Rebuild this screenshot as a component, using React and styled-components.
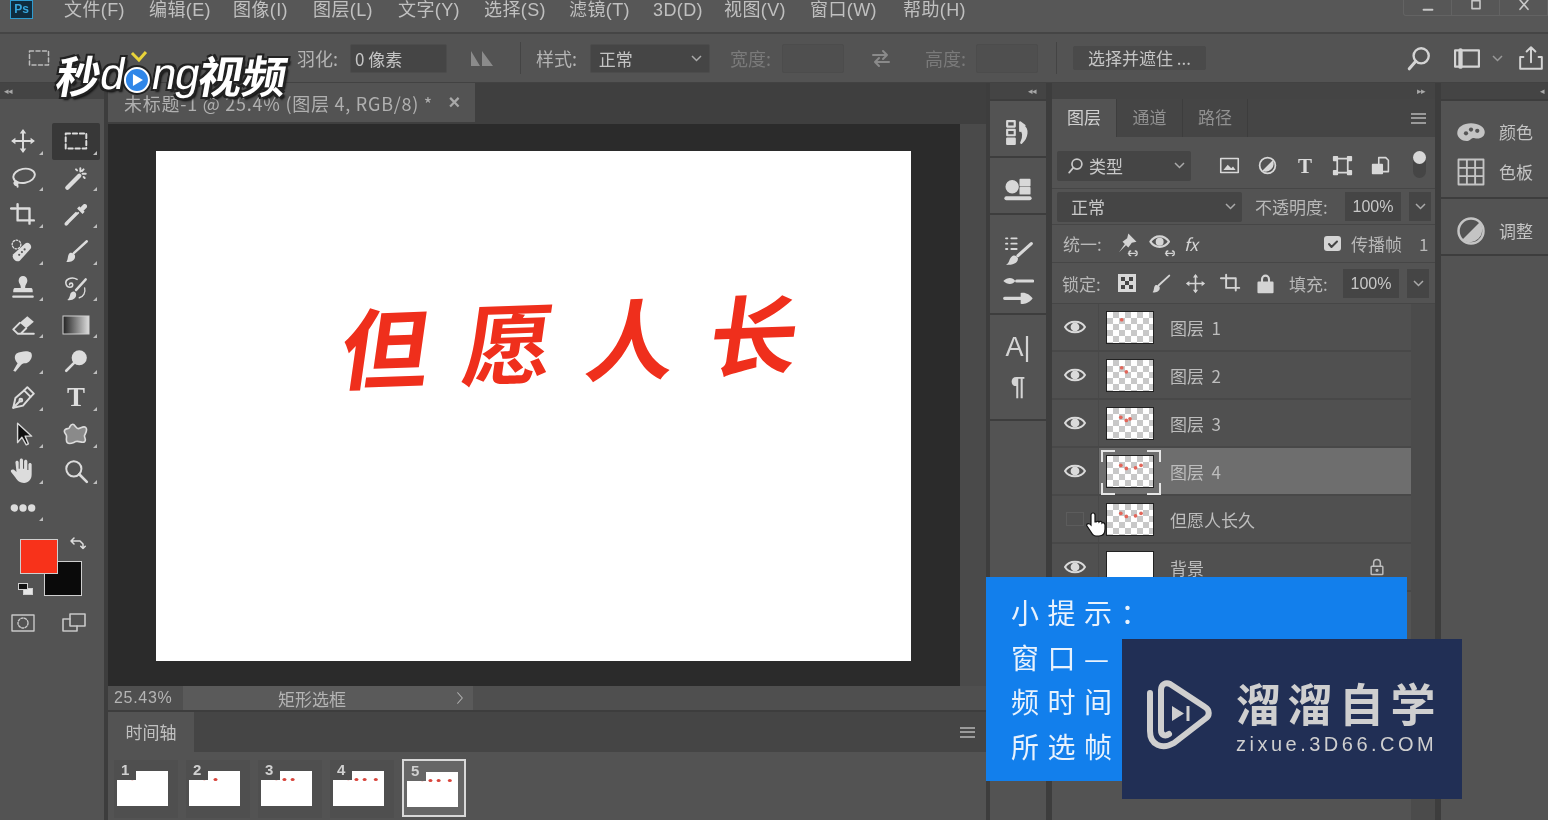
import React from "react";
import styled, { createGlobalStyle } from "styled-components";

const CJK = `"Noto Sans CJK SC", "Liberation Sans", sans-serif`;
const MIXED = `"Liberation Sans", "Noto Sans CJK SC", sans-serif`;

const GlobalStyle = createGlobalStyle`
  html, body { margin: 0; padding: 0; background: #535353; overflow: hidden; }
  * { box-sizing: border-box; }
`;

const Page = styled.div`
  position: relative;
  width: 1548px;
  height: 820px;
  overflow: hidden;
  display: flex;
  flex-direction: column;
  background: #3a3a3a;
  font-family: ${CJK};
  color: #bcbcbc;
  filter: blur(0.55px);
`;

const MenuBar = styled.div`
  height: 34px;
  flex: none;
  display: flex;
  align-items: flex-start;
  background: #575757;
  border-bottom: 2px solid #454545;
  padding-left: 10px;
`;
const PsBadge = styled.div`
  width: 23px;
  height: 19px;
  margin-right: 31px;
  background: #0f2c3f;
  border: 1px solid #2e9bd0;
  color: #37a5dc;
  font: bold 12px "Liberation Sans", sans-serif;
  line-height: 17px;
  text-align: center;
`;
const MenuItem = styled.span`
  width: ${(p) => p.$w}px;
  font-family: ${MIXED};
  font-size: 18px;
  line-height: 21px;
  letter-spacing: 0.4px;
  color: #c0c0c0;
  white-space: nowrap;
`;
const WindowControls = styled.div`
  margin-left: auto;
  width: 145px;
  height: 16px;
  display: flex;
  border: 1px solid #636363;
  border-top: none;
  border-right: none;
  border-radius: 0 0 0 3px;
`;
const WindowButton = styled.div`
  flex: 1;
  display: flex;
  justify-content: center;
  align-items: flex-start;
  border-right: 1px solid #636363;
  color: #c8c8c8;
`;

const OptionsBar = styled.div`
  height: 49px;
  flex: none;
  display: flex;
  align-items: center;
  background: #535353;
  border-bottom: 1px solid #424242;
  padding-left: 27px;
`;
const OptionLabel = styled.span`
  font-size: 18px;
  color: ${(p) => (p.$dim ? "#7a7a7a" : "#b4b4b4")};
  width: ${(p) => p.$w}px;
  margin-left: ${(p) => p.$ml || 0}px;
  white-space: nowrap;
`;
const OptionField = styled.div`
  width: ${(p) => p.$w}px;
  height: 29px;
  margin-left: ${(p) => p.$ml || 0}px;
  background: ${(p) => (p.$dim ? "#4f4f4f" : "#454545")};
  border: 1px solid #4c4c4c;
  border-radius: 2px;
  display: flex;
  align-items: center;
  justify-content: space-between;
  padding: 0 7px 0 4px;
  font-size: 17px;
  color: #c4c4c4;
`;
const OptionDivider = styled.div`
  width: 1px;
  height: 32px;
  margin-left: ${(p) => p.$ml}px;
  background: #444;
`;
const RefineButton = styled.div`
  width: 133px;
  height: 24px;
  margin-left: 16px;
  background: #4a4a4a;
  border-radius: 2px;
  font-size: 17px;
  line-height: 24px;
  text-align: center;
  color: #c4c4c4;
`;

const Workspace = styled.div`
  flex: 1;
  min-height: 0;
  display: flex;
  gap: 4px;
  background: #3d3d3d;
`;
const Strip = styled.div`
  height: 16px;
  flex: none;
  background: #444;
  color: #a8a8a8;
  font-size: 9px;
  line-height: 15px;
  padding: 0 ${(p) => p.$pr || 4}px 0 4px;
  display: flex;
  justify-content: ${(p) => p.$justify || "flex-start"};
  letter-spacing: -1px;
`;
const ToolColumn = styled.div`
  width: 104px;
  flex: none;
  display: flex;
  flex-direction: column;
  background: #535353;
`;
const ToolGrid = styled.div`
  display: grid;
  grid-template-columns: 46px 48px;
  grid-auto-rows: 36.65px;
  padding: 24px 0 0 0;
  column-gap: 6px;
`;
const Tool = styled.div`
  position: relative;
  display: flex;
  align-items: center;
  justify-content: center;
  color: #dcdcdc;
  background: ${(p) => (p.$active ? "#383838" : "transparent")};
  border-radius: 2px;
  &::after {
    content: "";
    position: absolute;
    right: 3px;
    bottom: 5px;
    border-left: 4px solid transparent;
    border-bottom: 4px solid #bdbdbd;
  }
`;
const ToolLetter = styled.span`
  font: bold 27px "Liberation Serif", serif;
  color: #dedede;
`;
const Swatches = styled.div`
  position: relative;
  width: 100px;
  height: 72px;
  margin-top: 13px;
`;
const Swatch = styled.div`
  position: absolute;
  left: ${(p) => p.$x}px;
  top: ${(p) => p.$y}px;
  width: ${(p) => p.$size}px;
  height: ${(p) => p.$size - 3}px;
  background: ${(p) => p.$color};
  border: 1px solid #cfcfcf;
`;
const SwatchIcon = styled.div`
  position: absolute;
  left: ${(p) => p.$x}px;
  top: ${(p) => p.$y}px;
  color: #ddd;
  display: flex;
`;
const ModeRow = styled.div`
  display: flex;
  gap: 21px;
  padding: 0 0 0 8px;
  color: #c8c8c8;
`;

const Center = styled.div`
  width: 878px;
  flex: none;
  display: flex;
  flex-direction: column;
`;
const TabStrip = styled.div`
  height: 41px;
  flex: none;
  background: #3f3f3f;
`;
const DocTab = styled.div`
  width: 367px;
  height: 39px;
  background: #535353;
  display: flex;
  align-items: center;
  justify-content: space-between;
  padding: 0 14px 0 16px;
  font-size: 18px;
  color: #b0b0b0;
  white-space: nowrap;
  letter-spacing: 0.75px;
`;
const TabClose = styled.span`
  font: bold 20px "Liberation Sans", sans-serif;
  color: #a8a8a8;
`;
const DocRow = styled.div`
  height: 562px;
  flex: none;
  display: flex;
`;
const Canvas = styled.div`
  width: 852px;
  background: #2b2b2b;
  padding: 27px 0 0 48px;
`;
const Artboard = styled.div`
  width: 755px;
  height: 510px;
  background: #fff;
  display: flex;
  justify-content: center;
  padding: 131px 0 0 52px;
`;
const Calligraphy = styled.div`
  font: 700 88px "Noto Sans CJK SC", sans-serif;
  line-height: 110px;
  color: #ef2f1c;
  letter-spacing: 34px;
  margin-right: -20px;
  white-space: nowrap;
  transform: skewX(-10deg) rotate(-2deg);
`;
const ScrollTrack = styled.div`
  width: 26px;
  background: #4a4a4a;
`;
const StatusBar = styled.div`
  height: 24px;
  flex: none;
  display: flex;
  background: #4f4f4f;
  font-size: 17px;
  color: #b4b4b4;
`;
const ZoomValue = styled.div`
  width: 75px;
  padding-left: 6px;
  font: 16px/24px "Liberation Sans", sans-serif;
  letter-spacing: 0.7px;
`;
const StatusInfo = styled.div`
  width: 290px;
  background: #5a5a5a;
  display: flex;
  align-items: center;
  justify-content: space-between;
  padding: 0 6px 0 95px;
`;
const Timeline = styled.div`
  flex: 1;
  display: flex;
  flex-direction: column;
  background: #535353;
  border-top: 2px solid #3d3d3d;
`;
const TimelineHead = styled.div`
  height: 40px;
  flex: none;
  display: flex;
  align-items: stretch;
  justify-content: space-between;
  padding-right: 11px;
  background: #454545;
`;
const TimelineTab = styled.div`
  width: 86px;
  background: #535353;
  font-size: 17px;
  line-height: 40px;
  text-align: center;
  color: #c0c0c0;
`;
const MenuLines = styled.div`
  align-self: center;
  width: 15px;
  height: 11px;
  border-top: 2px solid #9a9a9a;
  border-bottom: 2px solid #9a9a9a;
  position: relative;
  &::after {
    content: "";
    position: absolute;
    left: 0;
    right: 0;
    top: 2.5px;
    height: 2px;
    background: #9a9a9a;
  }
`;
const Frames = styled.div`
  display: flex;
  gap: 8px;
  padding: 8px 0 0 6px;
`;
const Frame = styled.div`
  position: relative;
  width: 64px;
  height: 58px;
  padding: 11px 0 0 3px;
  background: ${(p) => (p.$selected ? "#666" : "#4f4f4f")};
  border: ${(p) => (p.$selected ? "2px solid #d8d8d8" : "none")};
  margin-top: ${(p) => (p.$selected ? "-1px" : "0")};
`;
const FrameThumb = styled.div`
  width: 51px;
  height: 35px;
  background: #fff;
`;
const FrameNo = styled.span`
  position: absolute;
  left: 0;
  top: 0;
  width: 22px;
  height: 20px;
  background: ${(p) => (p.$selected ? "#666" : "#4f4f4f")};
  padding-left: 7px;
  font: bold 15px/20px "Liberation Sans", sans-serif;
  color: #d0d0d0;
`;

const Dock = styled.div`
  width: ${(p) => p.$w}px;
  margin-left: ${(p) => p.$ml || 0}px;
  flex: none;
  display: flex;
  flex-direction: column;
  gap: 2px;
  background: #3d3d3d;
`;
const DockGroup = styled.div`
  height: ${(p) => p.$h}px;
  flex: ${(p) => (p.$fill ? "1" : "none")};
  display: flex;
  flex-direction: column;
  align-items: ${(p) => (p.$wide ? "stretch" : "center")};
  gap: ${(p) => p.$gap || 0}px;
  padding-top: ${(p) => p.$pt || 0}px;
  background: #535353;
  color: #d8d8d8;
`;
const DockEntry = styled.div`
  display: flex;
  align-items: center;
  gap: 13px;
  padding-left: 15px;
  font-size: 17px;
  line-height: 30px;
  color: #c4c4c4;
`;
const DockLetter = styled.span`
  font: ${(p) => p.$font};
  color: #d4d4d4;
`;

const Panel = styled.div`
  width: 383px;
  margin-left: 2px;
  flex: none;
  display: flex;
  flex-direction: column;
  background: #535353;
`;
const PanelTabs = styled.div`
  height: 38px;
  flex: none;
  display: flex;
  align-items: stretch;
  background: #454545;
  padding-right: 9px;
`;
const PanelTab = styled.div`
  width: ${(p) => p.$w}px;
  background: ${(p) => (p.$active ? "#535353" : "transparent")};
  border-right: 1px solid #3d3d3d;
  color: ${(p) => (p.$active ? "#d0d0d0" : "#909090")};
  font-size: 17px;
  line-height: 36px;
  text-align: center;
`;
const PanelMenu = styled(MenuLines)`
  margin-left: auto;
`;
const PanelRow = styled.div`
  height: ${(p) => p.$h}px;
  flex: none;
  display: flex;
  align-items: center;
  padding: ${(p) => p.$pt || 0}px 0 0 ${(p) => p.$pl || 5}px;
  border-bottom: 1px solid #464646;
  color: #b8b8b8;
  font-size: 17px;
`;
const DropDown = styled.div`
  width: ${(p) => p.$w}px;
  height: ${(p) => p.$h || 30}px;
  flex: none;
  background: #454545;
  border-radius: 2px;
  display: flex;
  align-items: center;
  justify-content: space-between;
  padding: 0 6px 0 ${(p) => p.$pl || 14}px;
  font-size: 17px;
  color: #c8c8c8;
`;
const DropLabel = styled.span`
  display: flex;
  align-items: center;
  gap: 5px;
`;
const FilterIcons = styled.div`
  display: flex;
  align-items: center;
  gap: 17px;
  margin-left: 28px;
  color: #d8d8d8;
`;
const FilterLetter = styled.span`
  font: bold 21px/22px "Liberation Serif", serif;
  color: #dcdcdc;
  width: 20px;
  text-align: center;
`;
const Toggle = styled.div`
  position: relative;
  width: 13px;
  height: 24px;
  margin-left: 22px;
  border-radius: 7px;
  background: #454545;
  &::before {
    content: "";
    position: absolute;
    left: 0;
    top: -3px;
    width: 13px;
    height: 13px;
    border-radius: 50%;
    background: #d8d8d8;
  }
`;
const Percent = styled.div`
  width: 56px;
  height: 29px;
  flex: none;
  background: #454545;
  font: 16px/29px "Liberation Sans", sans-serif;
  text-align: center;
  color: #c8c8c8;
`;
const PercentCaret = styled.div`
  width: 22px;
  height: 29px;
  margin-left: 8px;
  background: #454545;
  display: flex;
  align-items: center;
  justify-content: center;
  flex: none;
`;
const RowLabel = styled.span`
  width: ${(p) => p.$w}px;
  margin-left: ${(p) => p.$ml || 0}px;
  flex: none;
  white-space: nowrap;
  color: ${(p) => p.$color || "#b8b8b8"};
`;
const IconGroup = styled.div`
  display: flex;
  align-items: center;
  gap: ${(p) => p.$gap}px;
  margin-left: ${(p) => p.$ml || 0}px;
  color: #d4d4d4;
`;
const CheckBox = styled.div`
  width: 17px;
  height: 15px;
  margin-left: auto;
  margin-right: 10px;
  background: #d4d4d4;
  border-radius: 3px;
  color: #444;
  display: flex;
  align-items: center;
  justify-content: center;
`;
const LayerArea = styled.div`
  flex: 1;
  display: flex;
`;
const LayerList = styled.div`
  width: 359px;
  flex: none;
  display: flex;
  flex-direction: column;
`;
const LayerTrack = styled.div`
  flex: 1;
  background: #4b4b4b;
`;
const LayerRow = styled.div`
  height: 48px;
  flex: none;
  display: flex;
  align-items: center;
  border-bottom: 2px solid #484848;
  background: #505050;
`;
const EyeCell = styled.div`
  position: relative;
  width: 47px;
  height: 100%;
  flex: none;
  display: flex;
  align-items: center;
  justify-content: center;
  border-right: 1px solid #494949;
  color: #dadada;
`;
const HiddenBox = styled.div`
  width: 18px;
  height: 14px;
  border: 1px solid #5c5c5c;
`;
const HandCursor = styled.div`
  position: absolute;
  right: -10px;
  top: 15px;
  display: flex;
`;
const LayerBody = styled.div`
  flex: 1;
  height: 100%;
  display: flex;
  align-items: center;
  padding-left: 7px;
  background: ${(p) => (p.$selected ? "#6e6e6e" : "transparent")};
`;
const ThumbFrame = styled.div`
  position: relative;
  width: 48px;
  height: 33px;
  flex: none;
  margin-right: 16px;
  border: 1px solid #222;
  background: ${(p) =>
    p.$solid
      ? "#fff"
      : "repeating-conic-gradient(#c8c8c8 0% 25%, #fff 0% 50%) 0 0 / 12px 12px"};
`;
const CornerMarks = styled.svg`
  position: absolute;
  left: -6px;
  top: -6px;
`;
const Specks = styled.svg`
  position: absolute;
  inset: 0;
  width: 100%;
  height: 100%;
`;
const LayerName = styled.span`
  font-size: 17px;
  color: #bdbdbd;
  white-space: pre;
`;
const LayerLock = styled.div`
  margin-left: auto;
  margin-right: 24px;
  display: flex;
  color: #bdbdbd;
`;

const Watermark = styled.div`
  position: absolute;
  left: 57px;
  top: 44px;
  height: 60px;
  display: flex;
  align-items: center;
  transform: skewX(-10deg);
  font-family: ${MIXED};
  font-weight: 700;
  font-size: 44px;
  color: #fff;
  text-shadow: 2px 2px 0 #222, -2px 2px 0 #222, 2px -2px 0 #222, -2px -2px 0 #222, 3px 3px 2px #111;
  white-space: nowrap;
`;
const WatermarkLatin = styled.span`
  font: 400 44px "Liberation Sans", sans-serif;
  line-height: 60px;
  letter-spacing: -1px;
`;
const PlayDot = styled.span`
  position: relative;
  width: 26px;
  height: 26px;
  margin: 12px 1px 0;
  border-radius: 50%;
  background: #2f86e8;
  border: 2px solid #fff;
  box-shadow: 0 0 0 2px #222;
  display: flex;
  align-items: center;
  justify-content: center;
  transform: skewX(10deg);
`;
const Heart = styled.svg`
  position: absolute;
  left: 4px;
  top: -18px;
`;

const TipCard = styled.div`
  position: absolute;
  left: 986px;
  top: 577px;
  width: 421px;
  height: 204px;
  background: #127fec;
  padding: 13px 0 0 25px;
  color: #e8f2fd;
  font-size: 28px;
  line-height: 44.6px;
  letter-spacing: 8.5px;
`;
const LogoCard = styled.div`
  position: absolute;
  left: 1122px;
  top: 639px;
  width: 340px;
  height: 160px;
  background: #212f55;
  display: flex;
  align-items: center;
  gap: 23px;
  padding: 0 0 3px 25px;
  color: #cfcfcf;
`;
const LogoMark = styled.svg`
  margin-bottom: 5px;
  flex: none;
`;
const LogoText = styled.div`
  display: flex;
  flex-direction: column;
`;
const LogoTitle = styled.div`
  font-family: ${MIXED};
  font-size: 45px;
  font-weight: 700;
  line-height: 54px;
  letter-spacing: 6.5px;
  white-space: nowrap;
`;
const LogoUrl = styled.div`
  font: 20px/24px "Liberation Sans", sans-serif;
  letter-spacing: 3.5px;
  margin-top: -2px;
  white-space: nowrap;
`;

const Glyph = ({ s = 26, w, h, sw = 1.8, children }) => (
  <svg
    width={w || s}
    height={h || s}
    viewBox="0 0 24 24"
    fill="none"
    stroke="currentColor"
    strokeWidth={sw}
    strokeLinecap="round"
    strokeLinejoin="round"
  >
    {children}
  </svg>
);

const Fill = (props) => <path fill="currentColor" stroke="none" {...props} />;

const icons = {
  move: (
    <>
      <path d="M12 3v18M3 12h18" />
      <Fill d="M12 1l3 4H9zM12 23l-3-4h6zM1 12l4-3v6zM23 12l-4 3V9z" />
    </>
  ),
  marquee: <rect x="2.5" y="5" width="19" height="14" strokeDasharray="4 2.5" />,
  lasso: (
    <>
      <ellipse cx="13" cy="10" rx="10" ry="6.5" transform="rotate(-10 13 10)" />
      <path d="M5 15c-2 2 0 4 1.5 3s0-3-1.5-3c1 2 2 3 2 5" />
    </>
  ),
  wand: (
    <>
      <path d="M4 21L15 10" strokeWidth="4" />
      <path d="M16 3v3M21 8h-3M19 4l-1.5 1.5M20 12l-1-1M12 4l1 1" />
    </>
  ),
  crop: <path d="M1 6h4M7 2v15h15M7 6h11v14" strokeWidth="2.2" />,
  dropper: (
    <>
      <path d="M14 10L5 19c-1 1-1 2-2 2s-1-1 0-2l9-9" />
      <Fill d="M13 6l5 5 2-2-1-1 3-3c1-2-1-4-3-3l-3 3-1-1z" />
    </>
  ),
  heal: (
    <>
      <Fill d="M3 15L14 5c3-2 7 2 5 5L9 21c-3 2-8-2-6-6z" />
      <circle cx="11" cy="13" r="1" fill="#555" stroke="none" />
      <circle cx="13.5" cy="10.5" r="1" fill="#555" stroke="none" />
      <circle cx="8.5" cy="15.5" r="1" fill="#555" stroke="none" />
      <circle cx="6" cy="6" r="4" strokeDasharray="1.5 1.5" strokeWidth="1.2" />
    </>
  ),
  brush: (
    <>
      <path d="M10 14L22 3" strokeWidth="2.2" />
      <Fill d="M3 22c5 1 9-2 8-6-1-2-3-3-5-2-2 2-1 6-3 8z" />
    </>
  ),
  stamp: (
    <>
      <Fill d="M8 5a4 4 0 0 1 8 0c0 3-2 3-2 7h5c2 0 2 2 2 4H3c0-2 0-4 2-4h5c0-4-2-4-2-7z" />
      <path d="M3 20h18" strokeWidth="2" />
    </>
  ),
  history: (
    <>
      <path d="M13 4C8 1 1 4 3 9c1 3 6 3 6 0 0-2-3-2-3 0" strokeWidth="1.4" />
      <path d="M12 14L21 4" strokeWidth="2.2" />
      <Fill d="M4 23c5 1 9-2 8-6-1-2-3-2-4-1-2 1-1 5-4 7z" />
      <path d="M20 12c1 4-1 8-5 9" strokeWidth="1.2" />
    </>
  ),
  eraser: (
    <>
      <Fill d="M9 10l7-6 6 5-7 6z" />
      <path d="M9 10l-6 6 4 4h15M15 15l-5 5" />
    </>
  ),
  smudge: <Fill d="M6 5c4-2 10-3 13-1 3 3 0 9-4 10-2 0-4 0-5 2l-5 6-2-1 4-7C5 12 3 8 6 5z" />,
  dodge: (
    <>
      <circle cx="15" cy="9" r="7" fill="currentColor" stroke="none" />
      <path d="M10 14l-7 7" strokeWidth="2.4" />
    </>
  ),
  pen: (
    <>
      <path d="M3 21l2-9 8-7 6 6-7 8z" />
      <path d="M3 21l6-6M13 5l3-3 6 6-3 3" />
      <circle cx="10" cy="14" r="1.3" />
    </>
  ),
  path: <path d="M7 2v18l4-5 4 7 2-1-3-7h6z" fill="#111" stroke="#d8d8d8" strokeWidth="1.3" />,
  shape: (
    <path
      d="M9 3c2 0 3 4 5 4s5-3 7-1 0 5-1 7 2 4 0 6-5-1-8 0-6 3-8 1 0-5-1-7-3-3-1-5 3 0 4-2 1-3 3-3z"
      fill="#8a8a8a"
      strokeWidth="1.5"
    />
  ),
  hand: (
    <Fill d="M5 4c0-2 3-2 3 0v6h1V2c0-2 3-2 3 0v8h1V3c0-2 3-2 3 0v8h1V6c0-2 3-2 3 0v9c0 5-3 8-7 8s-6-2-8-5l-4-5c-1-2 1-3 3-2l2 2z" />
  ),
  zoom: (
    <>
      <circle cx="10" cy="10" r="7" />
      <path d="M15 15l7 7" strokeWidth="2.4" />
    </>
  ),
  dots: (
    <>
      <circle cx="4" cy="12" r="2.5" fill="currentColor" />
      <circle cx="12" cy="12" r="2.5" fill="currentColor" />
      <circle cx="20" cy="12" r="2.5" fill="currentColor" />
    </>
  ),
};

const tools = [
  "move", "marquee", "lasso", "wand", "crop", "dropper", "heal", "brush", "stamp", "history",
  "eraser", "gradient", "smudge", "dodge", "pen", "text", "path", "shape", "hand", "zoom",
];

const menu = [
  ["文件(F)", 85],
  ["编辑(E)", 84],
  ["图像(I)", 80],
  ["图层(L)", 85],
  ["文字(Y)", 86],
  ["选择(S)", 85],
  ["滤镜(T)", 84],
  ["3D(D)", 71],
  ["视图(V)", 86],
  ["窗口(W)", 93],
  ["帮助(H)", 70],
];

const Caret = ({ color = "#aaa" }) => (
  <svg width="11" height="7" viewBox="0 0 11 7" fill="none" stroke={color} strokeWidth="1.5">
    <path d="M1 1l4.5 4.5L10 1" />
  </svg>
);

const Eye = () => (
  <Glyph s={24}>
    <path d="M2 12c4-7 16-7 20 0-4 7-16 7-20 0z" strokeWidth="2" />
    <circle cx="12" cy="12" r="3.5" fill="currentColor" />
  </Glyph>
);

const Lock = ({ s = 20 }) => (
  <Glyph s={s}>
    <path d="M8 11V7a4 4 0 0 1 8 0v4" />
    <rect x="5" y="11" width="14" height="10" rx="1" />
    <circle cx="12" cy="16" r="1" fill="currentColor" />
  </Glyph>
);

// specks of the red lettering in the small previews, position in percent
const speckSets = {
  1: [[32, 25]],
  2: [[32, 25], [42, 38]],
  3: [[30, 30], [42, 40], [50, 35]],
  4: [[30, 30], [42, 40], [62, 38], [74, 30]],
};

const RedSpecks = ({ n }) => (
  <Specks viewBox="0 0 100 100" preserveAspectRatio="none">
    {speckSets[n].map(([x, y]) => (
      <ellipse key={x} cx={x} cy={y} rx="4" ry="6" fill="#e2665a" />
    ))}
  </Specks>
);

const layers = [
  { name: "图层  1", n: 1 },
  { name: "图层  2", n: 2 },
  { name: "图层  3", n: 3 },
  { name: "图层  4", n: 4, selected: true },
  { name: "但愿人长久", n: 4, hidden: true },
  { name: "背景", solid: true, locked: true },
];

const frameSpecks = [
  [[30, 22]],
  [[30, 22], [52, 24]],
  [[30, 22], [46, 24], [62, 24]],
  [[30, 22], [46, 24], [62, 24], [84, 24]],
  [[30, 22], [46, 24], [62, 24], [84, 24]],
];

const App = () => (
  <Page>
    <GlobalStyle />
    <MenuBar>
      <PsBadge>Ps</PsBadge>
      {menu.map(([label, w]) => (
        <MenuItem key={label} $w={w}>
          {label}
        </MenuItem>
      ))}
      <WindowControls>
        <WindowButton>
          <Glyph s={18}><path d="M6 13h12" strokeWidth="2.4" /></Glyph>
        </WindowButton>
        <WindowButton>
          <Glyph s={16}><rect x="6" y="1" width="12" height="12" strokeWidth="2.4" /></Glyph>
        </WindowButton>
        <WindowButton>
          <Glyph s={16}><path d="M6 0l12 14M18 0L6 14" strokeWidth="2.4" /></Glyph>
        </WindowButton>
      </WindowControls>
    </MenuBar>

    <OptionsBar>
      <Glyph s={24} sw={1.5}>{icons.marquee}</Glyph>
      <OptionLabel $w={50} $ml={246}>羽化:</OptionLabel>
      <OptionField $w={97} $ml={3}>0 像素</OptionField>
      <IconGroup $gap={0} $ml={19}>
        <Glyph w={32} h={24} sw={0}>
          <Fill d="M1 20V5l9 15zM12 20V5l11 15z" fill="#8b8b8b" />
        </Glyph>
      </IconGroup>
      <OptionDivider $ml={22} />
      <OptionLabel $w={54} $ml={15}>样式:</OptionLabel>
      <OptionField $w={120}>
        <span>&nbsp;正常</span>
        <Caret />
      </OptionField>
      <OptionLabel $dim $w={52} $ml={20}>宽度:</OptionLabel>
      <OptionField $dim $w={62} />
      <IconGroup $gap={0} $ml={25}>
        <Glyph s={24} sw={2}>
          <g color="#8a8a8a">
            <path d="M4 9h14M14 5l4 4-4 4M20 16H6M10 12l-4 4 4 4" />
          </g>
        </Glyph>
      </IconGroup>
      <OptionLabel $dim $w={51} $ml={32}>高度:</OptionLabel>
      <OptionField $dim $w={62} />
      <OptionDivider $ml={18} />
      <RefineButton>选择并遮住 ...</RefineButton>
      <IconGroup $gap={24} $ml={200}>
        <Glyph s={26} sw={2.2}>
          <circle cx="14" cy="10" r="7" />
          <path d="M9 15l-6 7" strokeWidth="2.8" />
        </Glyph>
      </IconGroup>
      <IconGroup $gap={0} $ml={22}>
        <Glyph s={26} sw={2}>
          <rect x="1" y="5" width="22" height="15" />
          <path d="M6 5v15" strokeWidth="4" />
        </Glyph>
      </IconGroup>
      <IconGroup $gap={0} $ml={12}>
        <Caret color="#999" />
      </IconGroup>
      <IconGroup $gap={0} $ml={15}>
        <Glyph s={26} sw={1.8}>
          <path d="M5 11H2v11h20V11h-3M12 16V2M8 6l4-4 4 4" />
        </Glyph>
      </IconGroup>
    </OptionsBar>

    <Workspace>
      <ToolColumn>
        <Strip>◂◂</Strip>
        <ToolGrid>
          {tools.map((name) => (
            <Tool key={name} $active={name === "marquee"}>
              {name === "text" && <ToolLetter>T</ToolLetter>}
              {name === "gradient" && (
                <svg width="28" height="20">
                  <defs>
                    <linearGradient id="toolGradient">
                      <stop offset="0" stopColor="#222" />
                      <stop offset="1" stopColor="#ddd" />
                    </linearGradient>
                  </defs>
                  <rect x="1" y="1" width="26" height="18" fill="url(#toolGradient)" stroke="#d0d0d0" />
                </svg>
              )}
              {icons[name] && <Glyph>{icons[name]}</Glyph>}
            </Tool>
          ))}
          <Tool>
            <Glyph>{icons.dots}</Glyph>
          </Tool>
        </ToolGrid>
        <Swatches>
          <Swatch $x={44} $y={22} $size={38} $color="#0a0a0a" />
          <Swatch $x={20} $y={0} $size={38} $color="#f8321a" />
          <SwatchIcon $x={68} $y={-4}>
            <Glyph s={18} sw={2}>
              <path d="M4 8h12l4 4v6M4 8l4-4M4 8l4 4M20 18l-3-3M20 18l3-3" />
            </Glyph>
          </SwatchIcon>
          <Swatch $x={23} $y={49} $size={10} $color="#e6e6e6" />
          <Swatch $x={18} $y={44} $size={10} $color="#111" />
        </Swatches>
        <ModeRow>
          <Glyph w={30} h={24} sw={1.4}>
            <rect x="1" y="4" width="22" height="16" />
            <circle cx="12" cy="12" r="5" strokeDasharray="2 1.5" />
          </Glyph>
          <Glyph w={30} h={24} sw={1.6}>
            <rect x="8" y="3" width="15" height="12" />
            <path d="M8 8H1v12h14v-5" />
          </Glyph>
        </ModeRow>
      </ToolColumn>

      <Center>
        <TabStrip>
          <DocTab>
            <span>未标题-1 @ 25.4% (图层 4, RGB/8) *</span>
            <TabClose>×</TabClose>
          </DocTab>
        </TabStrip>
        <DocRow>
          <Canvas>
            <Artboard>
              <Calligraphy>但愿人长</Calligraphy>
            </Artboard>
          </Canvas>
          <ScrollTrack />
        </DocRow>
        <StatusBar>
          <ZoomValue>25.43%</ZoomValue>
          <StatusInfo>
            <span>矩形选框</span>
            <Glyph s={14} sw={1.8}><path d="M8 3l8 9-8 9" /></Glyph>
          </StatusInfo>
        </StatusBar>
        <Timeline>
          <TimelineHead>
            <TimelineTab>时间轴</TimelineTab>
            <MenuLines />
          </TimelineHead>
          <Frames>
            {frameSpecks.map((specks, i) => (
              <Frame key={i} $selected={i === 4}>
                <FrameThumb>
                  <svg width="51" height="35">
                    {specks.map(([x, y]) => (
                      <ellipse key={x} cx={(x * 51) / 100} cy={(y * 35) / 100} rx="2" ry="1.5" fill="#d8453c" />
                    ))}
                  </svg>
                </FrameThumb>
                <FrameNo $selected={i === 4}>{i + 1}</FrameNo>
              </Frame>
            ))}
          </Frames>
        </Timeline>
      </Center>

      <Dock $w={56}>
        <Strip $justify="flex-end" $pr={10}>◂◂</Strip>
        <DockGroup $h={55} $pt={18}>
          <Glyph s={26} sw={2}>
            <rect x="2" y="2" width="7" height="5" />
            <rect x="2" y="10" width="7" height="5" />
            <rect x="2" y="18" width="7" height="5" fill="currentColor" />
            <path d="M14 3l4 3-1 1c4 2 4 10-2 15 3-6 2-11-1-13v2z" fill="currentColor" />
          </Glyph>
        </DockGroup>
        <DockGroup $h={55} $pt={17}>
          <Glyph s={28} sw={1.5}>
            <circle cx="7" cy="10" r="5" fill="currentColor" />
            <rect x="14" y="4" width="8" height="5" fill="currentColor" />
            <rect x="14" y="11" width="8" height="5" fill="currentColor" />
            <path d="M2 20h20" strokeWidth="3.4" />
          </Glyph>
        </DockGroup>
        <DockGroup $h={98} $pt={18} $gap={8}>
          <Glyph s={32} sw={2}>
            <path d="M3 4h1M7 4h4M3 8h1M7 8h4M3 12h1M7 12h4" strokeWidth="1.4" />
            <path d="M12 17l10-9" strokeWidth="2.4" />
            <Fill d="M3 24c5 0 9-1 9-5-1-2-3-3-5-1s-1 4-4 6z" />
          </Glyph>
          <Glyph s={32} sw={2.4}>
            <path d="M11 6h12M2 19h12" />
            <Fill d="M1 6c3-3 7-3 9 0-2 3-6 3-9 0zM23 19c-2-3-6-5-9-4v8c3 1 7-1 9-4z" />
          </Glyph>
        </DockGroup>
        <DockGroup $h={104} $pt={14} $gap={6}>
          <DockLetter $font={`27px/36px "Liberation Sans", sans-serif`}>A|</DockLetter>
          <DockLetter $font={`bold 26px/30px "Liberation Sans", sans-serif`}>¶</DockLetter>
        </DockGroup>
        <DockGroup $fill />
      </Dock>

      <Panel>
        <Strip $justify="flex-end" $pr={10}>▸▸</Strip>
        <PanelTabs>
          <PanelTab $active $w={65}>图层</PanelTab>
          <PanelTab $w={66}>通道</PanelTab>
          <PanelTab $w={65}>路径</PanelTab>
          <PanelMenu />
        </PanelTabs>
        <PanelRow $h={52} $pt={6}>
          <DropDown $w={134} $pl={10}>
            <DropLabel>
              <Glyph s={17} sw={2.4}>
                <circle cx="14" cy="10" r="7" />
                <path d="M9 15l-6 7" />
              </Glyph>
              类型
            </DropLabel>
            <Caret />
          </DropDown>
          <FilterIcons>
            <Glyph s={21} sw={1.8}>
              <rect x="2" y="4" width="20" height="16" />
              <Fill d="M5 17l5-6 4 4 2-2 3 4z" />
            </Glyph>
            <Glyph s={21} sw={2}>
              <circle cx="12" cy="12" r="9" />
              <Fill d="M18 6A9 9 0 0 1 6 18z" />
            </Glyph>
            <FilterLetter>T</FilterLetter>
            <Glyph s={21} sw={2}>
              <path d="M5 4h14l-1 3v10l1 3H5l1-3V7z" />
              <rect x="2" y="2" width="4" height="4" fill="currentColor" />
              <rect x="18" y="2" width="4" height="4" fill="currentColor" />
              <rect x="2" y="18" width="4" height="4" fill="currentColor" />
              <rect x="18" y="18" width="4" height="4" fill="currentColor" />
            </Glyph>
            <Glyph s={21} sw={1.8}>
              <path d="M10 3h8l3 3v13H10z" />
              <rect x="3" y="11" width="11" height="10" fill="currentColor" />
            </Glyph>
          </FilterIcons>
          <Toggle />
        </PanelRow>
        <PanelRow $h={36}>
          <DropDown $w={185}>
            <span>正常</span>
            <Caret />
          </DropDown>
          <RowLabel $w={90} $ml={13}>不透明度:</RowLabel>
          <Percent>100%</Percent>
          <PercentCaret><Caret /></PercentCaret>
        </PanelRow>
        <PanelRow $h={38} $pl={11}>
          <RowLabel $w={49}>统一:</RowLabel>
          <IconGroup $gap={8}>
            <Glyph s={28} sw={1.8}>
              <Fill d="M14 3l7 7-4 1-3 4-2-2-6 6 5-7-2-2 4-3z" />
              <path d="M14 20h6M16 18c-2 0-2 4 0 4M20 18c2 0 2 4 0 4" strokeWidth="1.2" />
            </Glyph>
            <Glyph s={28} sw={1.8}>
              <path d="M2 10c4-6 12-6 16 0-4 6-12 6-16 0z" />
              <circle cx="10" cy="10" r="2.5" fill="currentColor" />
              <path d="M15 20h6M17 18c-2 0-2 4 0 4M21 18c2 0 2 4 0 4" strokeWidth="1.2" />
            </Glyph>
            <RowLabel $w={28} $color="#d4d4d4">
              <i>fx</i>
            </RowLabel>
          </IconGroup>
          <CheckBox>
            <Glyph s={12} sw={4}><path d="M4 12l5 6 11-11" /></Glyph>
          </CheckBox>
          <RowLabel $w={68}>传播帧</RowLabel>
          <RowLabel $w={16}>1</RowLabel>
        </PanelRow>
        <PanelRow $h={41} $pl={10}>
          <RowLabel $w={56}>锁定:</RowLabel>
          <IconGroup $gap={14}>
            <svg width="18" height="18" viewBox="0 0 18 18">
              <rect width="18" height="18" fill="#d8d8d8" />
              <rect x="3" y="3" width="4" height="4" fill="#444" />
              <rect x="11" y="3" width="4" height="4" fill="#444" />
              <rect x="7" y="7" width="4" height="4" fill="#444" />
              <rect x="3" y="11" width="4" height="4" fill="#444" />
              <rect x="11" y="11" width="4" height="4" fill="#444" />
            </svg>
            <Glyph s={21}>{icons.brush}</Glyph>
            <Glyph s={21}>{icons.move}</Glyph>
            <Glyph s={21}>{icons.crop}</Glyph>
            <Glyph s={21} sw={2.4}>
              <path d="M8 11V7a4 4 0 0 1 8 0v4" />
              <rect x="4" y="11" width="16" height="11" fill="currentColor" />
            </Glyph>
          </IconGroup>
          <RowLabel $w={54} $ml={13}>填充:</RowLabel>
          <Percent>100%</Percent>
          <PercentCaret><Caret /></PercentCaret>
        </PanelRow>
        <LayerArea>
          <LayerList>
            {layers.map((layer) => (
              <LayerRow key={layer.name}>
                <EyeCell>
                  {layer.hidden ? <HiddenBox /> : <Eye />}
                  {layer.hidden && (
                    <HandCursor>
                      <svg width="22" height="26" viewBox="0 0 22 26">
                        <path
                          d="M7 2c1.5 0 2 1 2 2v7l1 0c1-1 3-1 3 0 1-1 3-1 3 1 1-1 3 0 3 2v4c0 4-2 7-6 7H10c-3 0-4-2-5-4l-4-6c-1-2 1-3 3-2l1 1V4c0-1 1-2 2-2z"
                          fill="#fff"
                          stroke="#111"
                          strokeWidth="1.2"
                        />
                      </svg>
                    </HandCursor>
                  )}
                </EyeCell>
                <LayerBody $selected={layer.selected}>
                  <ThumbFrame $solid={layer.solid}>
                    {layer.n && <RedSpecks n={layer.n} />}
                    {layer.selected && (
                      <CornerMarks width="60" height="45" fill="none" stroke="#e6e6e6" strokeWidth="2">
                        <path d="M1 12V1h13M46 1h13v11M59 33v11H46M14 44H1V33" />
                      </CornerMarks>
                    )}
                  </ThumbFrame>
                  <LayerName>{layer.name}</LayerName>
                  {layer.locked && (
                    <LayerLock>
                      <Lock />
                    </LayerLock>
                  )}
                </LayerBody>
              </LayerRow>
            ))}
          </LayerList>
          <LayerTrack />
        </LayerArea>
      </Panel>

      <Dock $w={107} $ml={2}>
        <Strip $justify="flex-end">◂</Strip>
        <DockGroup $h={96} $wide $pt={16} $gap={10}>
          <DockEntry>
            <Glyph s={30} sw={0}>
              <Fill d="M12 5c6 0 11 3 11 7s-4 6-8 5c-2-1-3 1-5 2-4 1-9-2-9-6 0-5 5-8 11-8z" />
              <circle cx="8" cy="13" r="1.7" fill="#555" />
              <circle cx="12" cy="10" r="1.7" fill="#555" />
              <circle cx="17" cy="11" r="1.7" fill="#555" />
            </Glyph>
            <span>颜色</span>
          </DockEntry>
          <DockEntry>
            <Glyph s={30} sw={1.5}>
              <path d="M2 2h20v20H2zM2 8.7h20M2 15.3h20M8.7 2v20M15.3 2v20" />
            </Glyph>
            <span>色板</span>
          </DockEntry>
        </DockGroup>
        <DockGroup $h={55} $wide $pt={17}>
          <DockEntry>
            <Glyph s={30} sw={2}>
              <circle cx="12" cy="12" r="10" />
              <Fill d="M19 5A10 10 0 0 1 5 19z" />
            </Glyph>
            <span>调整</span>
          </DockEntry>
        </DockGroup>
        <DockGroup $fill />
      </Dock>
    </Workspace>

    <Watermark>
      <span>秒</span>
      <WatermarkLatin>d</WatermarkLatin>
      <PlayDot>
        <svg width="14" height="14" viewBox="0 0 14 14">
          <path d="M3 1l10 6-10 6z" fill="#fff" />
        </svg>
        <Heart width="18" height="12" viewBox="0 0 18 12">
          <path d="M2 2l7 7 7-8" fill="none" stroke="#e8d33a" strokeWidth="3" />
        </Heart>
      </PlayDot>
      <WatermarkLatin>ng</WatermarkLatin>
      <span>视频</span>
    </Watermark>

    <TipCard>
      <div>小提示：</div>
      <div>窗口—</div>
      <div>频时间</div>
      <div>所选帧</div>
    </TipCard>
    <LogoCard>
      <LogoMark width="66" height="70" viewBox="0 0 66 70" fill="none" stroke="#cfcfcf" strokeWidth="6" strokeLinecap="round" strokeLinejoin="round">
        <path d="M22 54c-4 3-8 1-8-4V10c0-6 5-8 9-6l35 23c5 3 5 9 0 12L27 63c-12 7-24 2-24-12V13" />
        <path d="M25 26l12 7.5-12 7.5z" fill="#cfcfcf" stroke="none" />
        <path d="M41 26v15" strokeWidth="3" strokeLinecap="butt" />
      </LogoMark>
      <LogoText>
        <LogoTitle>溜溜自学</LogoTitle>
        <LogoUrl>zixue.3D66.COM</LogoUrl>
      </LogoText>
    </LogoCard>
  </Page>
);

export default App;
